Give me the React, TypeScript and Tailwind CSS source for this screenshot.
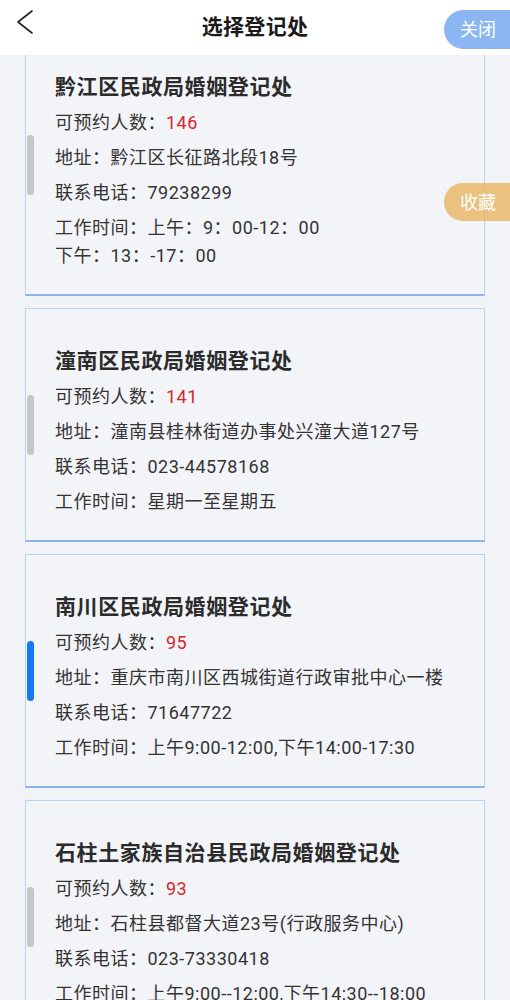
type Office = {
  name: string;
  quota: number;
  address: string;
  phone: string;
  hours: string[];
  active?: boolean;
};

const offices: Office[] = [
  {
    name: "黔江区民政局婚姻登记处",
    quota: 146,
    address: "黔江区长征路北段18号",
    phone: "79238299",
    hours: ["上午：9：00-12：00", "下午：13：-17：00"],
  },
  {
    name: "潼南区民政局婚姻登记处",
    quota: 141,
    address: "潼南县桂林街道办事处兴潼大道127号",
    phone: "023-44578168",
    hours: ["星期一至星期五"],
  },
  {
    name: "南川区民政局婚姻登记处",
    quota: 95,
    address: "重庆市南川区西城街道行政审批中心一楼",
    phone: "71647722",
    hours: ["上午9:00-12:00,下午14:00-17:30"],
    active: true,
  },
  {
    name: "石柱土家族自治县民政局婚姻登记处",
    quota: 93,
    address: "石柱县都督大道23号(行政服务中心)",
    phone: "023-73330418",
    hours: ["上午9:00--12:00,下午14:30--18:00"],
  },
];

const font = { fontFamily: 'Roboto, "Noto Sans CJK SC", "Noto Sans", sans-serif' };

export default function App() {
  return (
    <div className="relative h-[1000px] w-[510px] flex flex-col overflow-hidden bg-[#f2f3f7] text-[#333333]" style={font}>
      <header className="relative z-10 h-[55px] shrink-0 bg-white flex items-center justify-center">
        <button className="absolute left-[14px] top-[9px] text-[#222222]">
          <svg width="22" height="27" viewBox="0 0 22 27" fill="none">
            <polyline points="18,2 4,13 18,24" stroke="currentColor" strokeWidth="1.6" strokeLinecap="round" strokeLinejoin="round" />
          </svg>
        </button>
        <h1 className="text-[21px] font-bold text-[#1a1a1a] tracking-[0.3px]">选择登记处</h1>
        <button className="absolute right-0 top-[10px] h-[39px] w-[66px] rounded-l-full bg-[#8bb6f1] text-white text-[18px] pl-[2px]">
          关闭
        </button>
      </header>

      <main className="flex-1 overflow-hidden px-[25px]">
        <div className="-mt-[21px] flex flex-col gap-[12px]">
          {offices.map((o) => (
            <OfficeCard key={o.name} office={o} />
          ))}
        </div>
      </main>

      <button className="absolute right-0 top-[183px] h-[38px] w-[66px] rounded-l-full bg-[#e9b462]/80 text-white text-[18px] pl-[2px]">
        收藏
      </button>
    </div>
  );
}

function OfficeCard({ office }: { office: Office }) {
  return (
    <section className="relative bg-[#f3f4f8] border border-[#b6d3f3] border-b-2 border-b-[#86b6ec] pl-[29px] pr-[20px] pt-[37px] pb-[24px]">
      <span
        className={`absolute -left-px top-1/2 -translate-y-1/2 ml-[2px] h-[60px] w-[7px] rounded-[4px] ${
          office.active ? "bg-[#1677f5]" : "bg-[#c6c6c8]"
        }`}
      />
      <h2 className="text-[21px] leading-[30px] font-bold text-[#2b2b2b] tracking-[0.6px]">{office.name}</h2>
      <p className="mt-[7px] text-[18px] leading-[28px] tracking-[0.5px]">
        可预约人数：<span className="text-[#d6262c]">{office.quota}</span>
      </p>
      <p className="mt-[7px] text-[18px] leading-[28px] tracking-[0.5px]">地址：{office.address}</p>
      <p className="mt-[7px] text-[18px] leading-[28px] tracking-[0.5px]">联系电话：{office.phone}</p>
      <p className="mt-[7px] text-[18px] leading-[28px] tracking-[0.5px]">
        工作时间：{office.hours[0]}
        {office.hours.slice(1).map((h) => (
          <span key={h}>
            <br />
            {h}
          </span>
        ))}
      </p>
    </section>
  );
}
